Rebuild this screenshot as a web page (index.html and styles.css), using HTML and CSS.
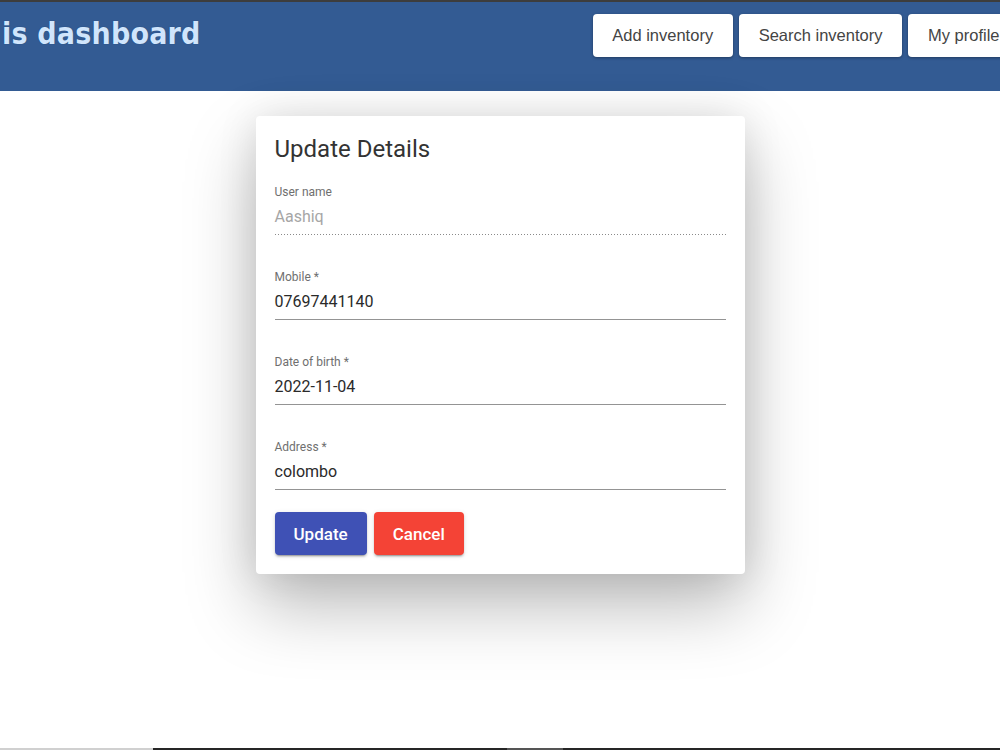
FILE: index.html
```html
<!DOCTYPE html>
<html lang="en">
<head>
<meta charset="utf-8">
<title>Dashboard</title>
<link rel="stylesheet" href="styles.css">
</head>
<body>
<div class="page">
  <header class="topbar">
    <h1 class="brand">is dashboard</h1>
    <nav class="nav">
      <button class="nav-btn" type="button">Add inventory</button>
      <button class="nav-btn" type="button">Search inventory</button>
      <button class="nav-btn" type="button">My profile</button>
    </nav>
  </header>

  <main class="main">
    <form class="card">
      <h2 class="card-title">Update Details</h2>

      <div class="field field-disabled">
        <label class="field-label">User name</label>
        <div class="field-input">Aashiq</div>
      </div>

      <div class="field">
        <label class="field-label">Mobile *</label>
        <div class="field-input">07697441140</div>
      </div>

      <div class="field">
        <label class="field-label">Date of birth *</label>
        <div class="field-input">2022-11-04</div>
      </div>

      <div class="field">
        <label class="field-label">Address *</label>
        <div class="field-input">colombo</div>
      </div>

      <div class="actions">
        <button class="btn btn-primary" type="button">Update</button>
        <button class="btn btn-danger" type="button">Cancel</button>
      </div>
    </form>
  </main>

  <div class="bottom-edge"></div>
</div>
</body>
</html>
```

FILE: styles.css
```css
* {
  box-sizing: border-box;
}

html, body {
  margin: 0;
  padding: 0;
  background: #ffffff;
}

body {
  font-family: Roboto, "Liberation Sans", Arial, sans-serif;
  overflow: hidden;
}

.page {
  display: flex;
  flex-direction: column;
  height: 100vh;
}

/* ---------- top bar ---------- */
.topbar {
  flex: 0 0 auto;
  display: flex;
  align-items: flex-start;
  height: 91px;
  border-top: 2px solid #3d3d3d;
  background: #335b93;
  overflow: hidden;
}

.brand {
  margin: 0;
  padding: 12px 0 0 2px;
  font-family: "DejaVu Sans Condensed", "DejaVu Sans", sans-serif;
  font-stretch: condensed;
  font-weight: bold;
  font-size: 30px;
  line-height: 40px;
  letter-spacing: 0.2px;
  color: #d0e5fc;
  text-shadow: 0 0 1px #1d3f70;
  white-space: nowrap;
}

/* the row of buttons runs past the right edge of the bar */
.nav {
  display: flex;
  gap: 6.5px;
  margin-left: auto;
  margin-right: -19px;
  margin-top: 12px;
  flex-shrink: 0;
}

.nav-btn {
  height: 43px;
  padding: 0 19.5px;
  border: none;
  border-radius: 4px;
  background: #ffffff;
  color: #444444;
  font-family: "Liberation Sans", Arial, sans-serif;
  font-size: 16.5px;
  box-shadow: 0 1px 3px rgba(0, 0, 0, 0.35);
  white-space: nowrap;
}

/* ---------- form card ---------- */
.main {
  flex: 1 1 auto;
  display: flex;
  justify-content: center;
  align-items: flex-start;
  padding-top: 25px;
}

.card {
  width: 489px;
  padding: 17px 19px 19px;
  background: #ffffff;
  border-radius: 4px;
  box-shadow:
    0 32px 70px rgba(0, 0, 0, 0.27),
    0 0 40px rgba(0, 0, 0, 0.10);
}

.card-title {
  margin: 0;
  font-size: 24px;
  font-weight: 400;
  line-height: 32px;
  color: #333333;
}

.field {
  display: flex;
  flex-direction: column;
  margin-top: 35px;
}

.card-title + .field {
  margin-top: 20px;
}

.field-label {
  font-size: 12px;
  line-height: 14px;
  color: #6f6f6f;
}

.field-input {
  height: 36px;
  line-height: 36px;
  font-size: 16px;
  color: #2a2a2a;
  border-bottom: 1px solid #949494;
}

.field-disabled .field-input {
  color: #a6a6a6;
  border-bottom: none;
  background-image: repeating-linear-gradient(to right, #8a8a8a 0 1px, transparent 1px 3px);
  background-size: 100% 1px;
  background-repeat: no-repeat;
  background-position: left bottom;
}

.actions {
  display: flex;
  gap: 7px;
  margin-top: 22px;
}

.btn {
  height: 43px;
  padding: 0 19px;
  border: none;
  border-radius: 4px;
  font-family: Roboto, "Liberation Sans", Arial, sans-serif;
  font-size: 17px;
  font-weight: 500;
  color: #ffffff;
  box-shadow:
    0 3px 1px -2px rgba(0, 0, 0, 0.2),
    0 2px 2px 0 rgba(0, 0, 0, 0.14),
    0 1px 5px 0 rgba(0, 0, 0, 0.12);
}

.btn-primary {
  background: #3f51b5;
}

.btn-danger {
  background: #f44336;
}

/* thin window edge along the bottom */
.bottom-edge {
  flex: 0 0 2px;
  background: linear-gradient(to right,
    #d0d0d0 0 153px,
    #262626 153px 507px,
    #555555 507px 563px,
    #262626 563px 100%);
}
```
